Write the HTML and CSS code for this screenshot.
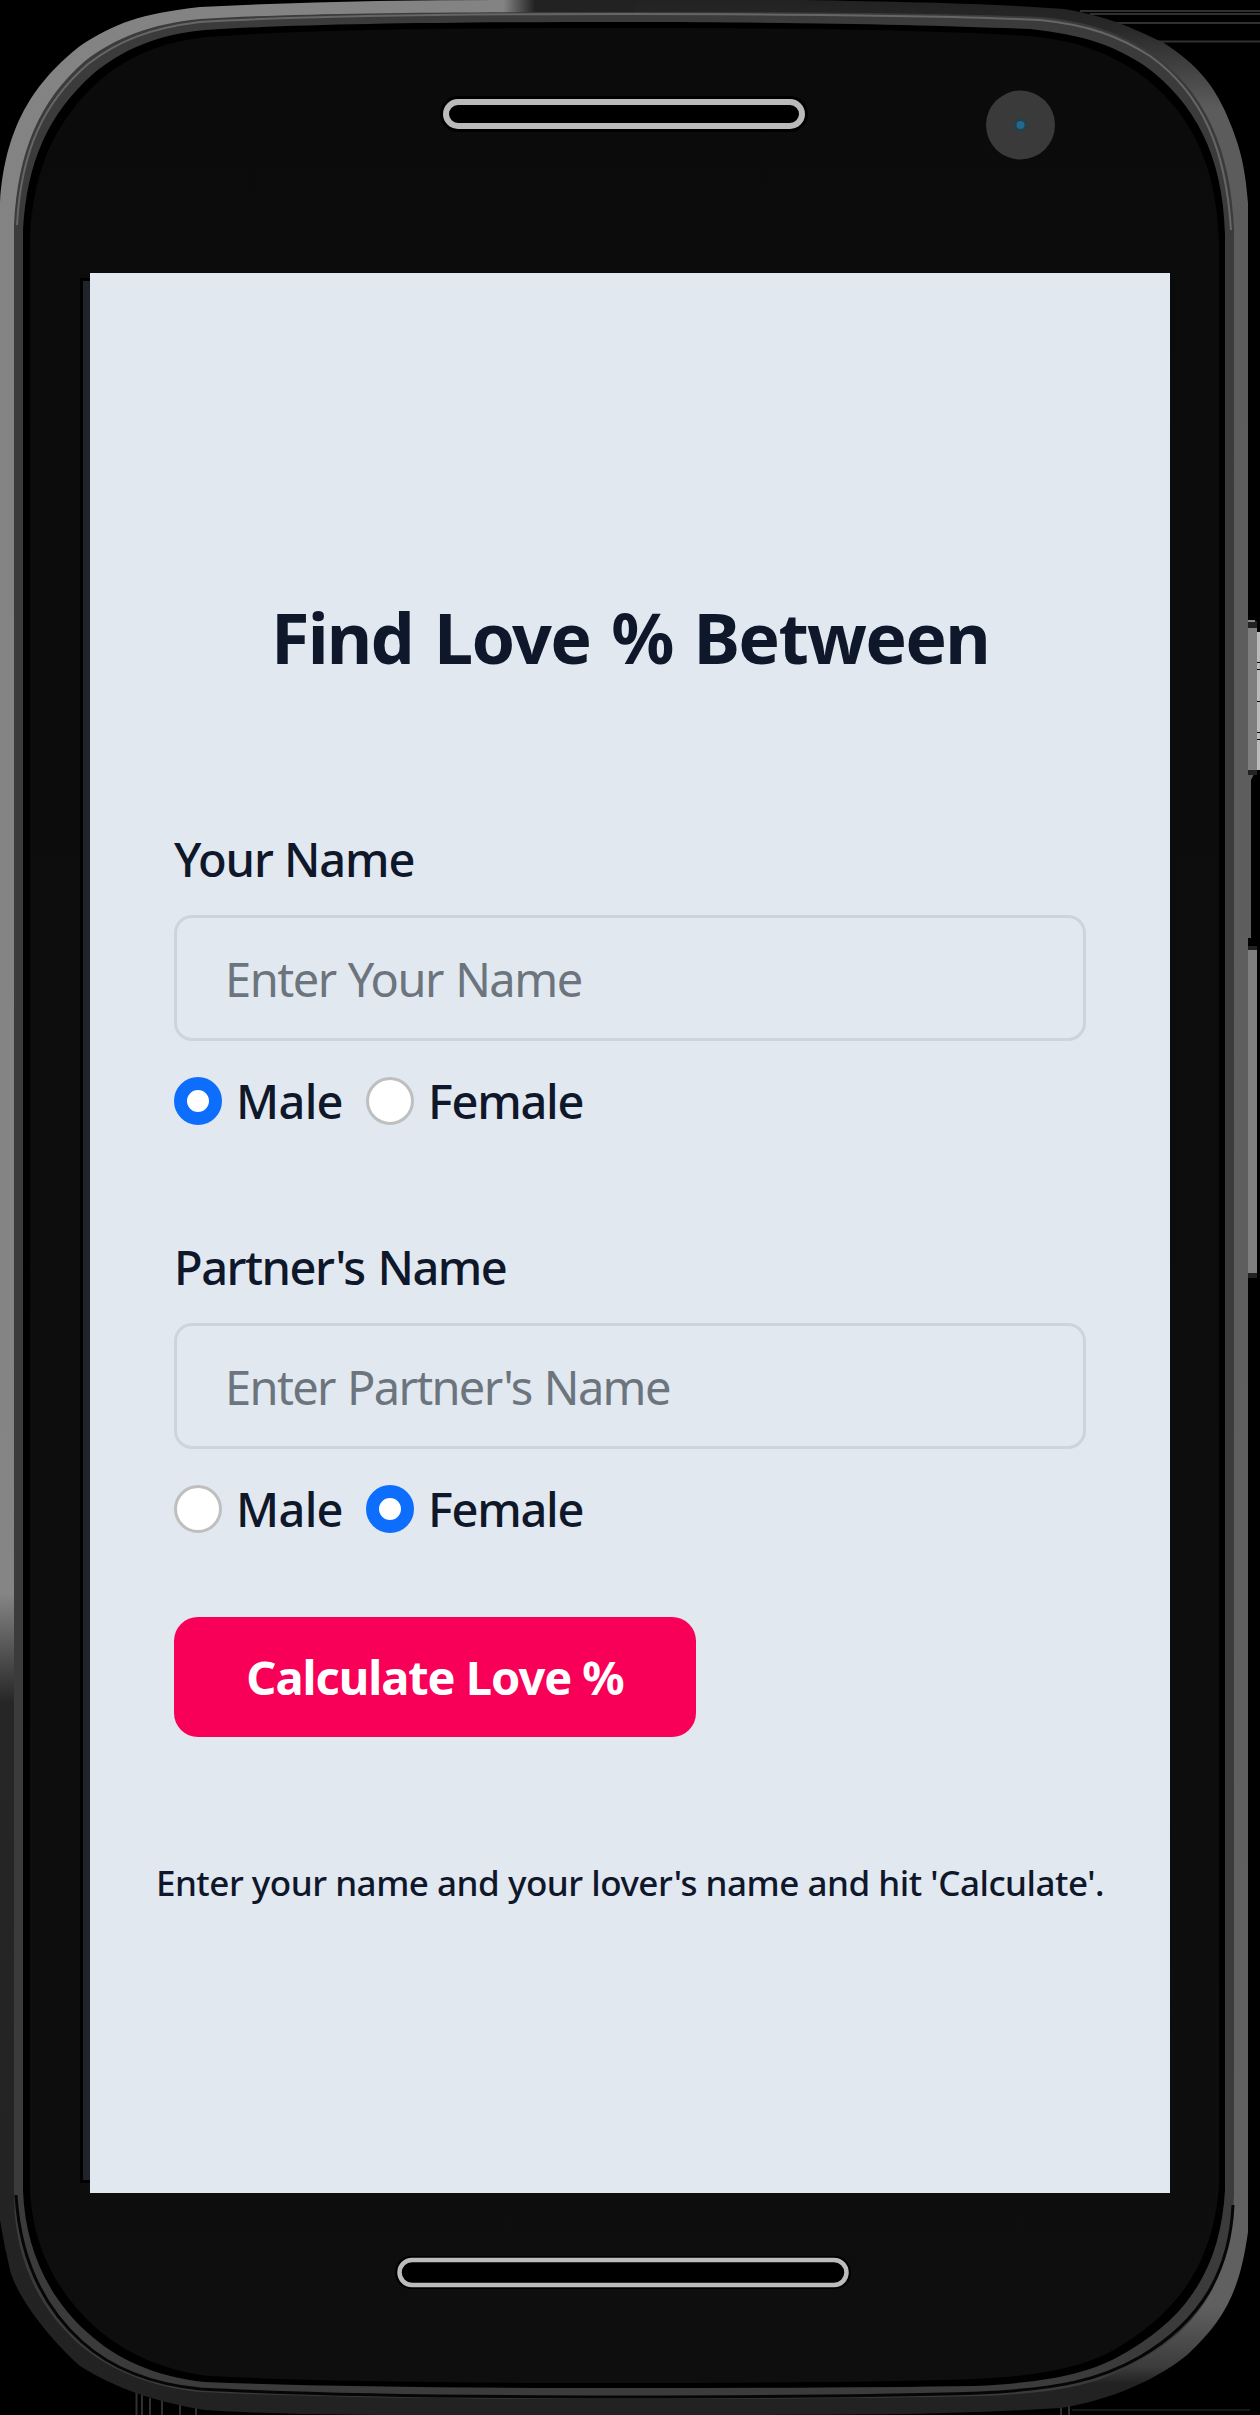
FILE: index.html
```html
<!DOCTYPE html>
<html lang="en">
<head>
<meta charset="utf-8">
<title>Love Calculator</title>
<link rel="stylesheet" href="styles.css">
</head>
<body>
<div class="phone">
  <svg class="phone-body" viewBox="0 0 1260 2415" aria-hidden="true">
    <defs>
      <linearGradient id="left" x1="0" y1="0" x2="0" y2="1">
        <stop offset="0" stop-color="#838383"/><stop offset=".66" stop-color="#858585"/>
        <stop offset=".705" stop-color="#262626"/><stop offset="1" stop-color="#222"/>
      </linearGradient>
      <linearGradient id="right" x1="0" y1="0" x2="0" y2="1">
        <stop offset="0" stop-color="#222"/><stop offset=".012" stop-color="#292929"/>
        <stop offset=".045" stop-color="#5c5c5c"/><stop offset=".955" stop-color="#606060"/>
        <stop offset=".98" stop-color="#3c3c3c"/><stop offset=".987" stop-color="#222"/>
      </linearGradient>
      <linearGradient id="top" x1="0" y1="0" x2="1" y2="0">
        <stop offset="0" stop-color="#838383"/><stop offset=".3" stop-color="#838383"/>
        <stop offset="1" stop-color="#222"/>
      </linearGradient>
      <linearGradient id="bezel" x1="0" y1="0" x2="0" y2="1">
        <stop offset="0" stop-color="#0b0b0b"/><stop offset="1" stop-color="#0e0e0e"/>
      </linearGradient>
      <clipPath id="shell">
        <path d="M0 203C5 120 40 78 80 46C115 23 140 14 200 7C300 2 400 0 500 0H800C920 2 1000 4 1064 9C1110 17 1130 27 1164 43C1190 60 1210 78 1225 111C1240 145 1245 165 1248 203V2232C1240 2290 1225 2320 1187 2355C1150 2385 1100 2402 1060 2408C950 2415 850 2415 750 2415H400Q280 2415 205 2410C155 2402 115 2388 80 2366C40 2330 15 2290 10 2270Q4 2245 0 2220Z"/>
      </clipPath>
    </defs>
    <g class="streaks">
      <path d="M1080 11H1260M1090 14H1260M1115 23H1260M1155 41.500H1260" />
      <path d="M136.500 2390V2415M142 2390V2415M150 2398V2415M162 2400V2415M180 2403V2415M196 2405V2415M1061 2406V2415M1069 2406V2415" />
      <path class="faint" d="M1072 2410H1250" />
    </g>
    <g clip-path="url(#shell)">
      <rect width="630" height="2415" fill="url(#left)"/>
      <rect x="630" width="630" height="2415" fill="url(#right)"/>
      <rect x="490" y="0" width="45" height="40" fill="url(#top)"/>
      <rect x="534" y="0" width="100" height="40" fill="#222"/>
    </g>
    <path fill="#3b3b3c" d="M14 225C18 150 40 100 85 61C115 38 150 24 200 19C300 13 440 12 625 12C800 12 940 13 1040 17C1090 21 1120 34 1150 52C1205 90 1231 150 1234 230V2195C1232 2270 1205 2325 1140 2360C1100 2385 1060 2393 980 2396Q850 2399 625 2399Q350 2399 200 2392C150 2387 110 2370 80 2345C40 2310 14 2260 14 2195Z"/>
    <path fill="none" stroke="#666" stroke-width="2" d="M17 225C21 150 44 102 88 64C118 41 150 28 200 22C300 16 440 14 625 14C800 14 940 15 1040 20C1090 25 1120 37 1150 56C1203 94 1226 150 1231 230"/>
    <path fill="none" stroke="#060606" stroke-width="3" d="M1233 2205C1230 2270 1202 2321 1140 2357C1100 2380 1060 2389 980 2393Q850 2397 625 2397Q350 2397 200 2389C150 2384 110 2367 82 2342C43 2307 20 2260 16 2195"/>
    <path fill="#000" d="M23 230C27 162 48 114 93 74C122 50 155 35 205 30C300 24 440 22 625 22C800 22 930 25 1030 29C1085 35 1115 46 1145 66C1195 103 1223 155 1225 235V2190C1221 2260 1194 2312 1130 2350C1095 2372 1055 2382 975 2386Q850 2388 625 2388Q350 2388 205 2382C155 2377 115 2358 88 2333C50 2300 25 2250 23 2190Z"/>
    <path fill="url(#bezel)" d="M30 235C34 168 55 122 98 82C127 57 160 42 208 37C300 30 440 28 625 28C800 28 930 30 1030 36C1080 41 1110 54 1140 74C1188 110 1216 160 1219 240V2185C1214 2253 1187 2304 1125 2343C1092 2365 1052 2375 975 2379Q850 2383 625 2383Q350 2383 208 2376C160 2370 120 2350 94 2326C57 2292 31 2245 30 2185Z"/>
    <path fill="#000" d="M80 278H90V2183H80Z"/>
    <path fill="#20232a" d="M83 281H90V2180H83Z"/>
    <path fill="#5d5d5d" d="M1247 774H1254L1251 780V938H1247Z"/>
    <path fill="#222" d="M1248 621H1257V775H1248ZM1248 946H1257V1278H1248Z"/>
    <path fill="#7e7e7e" d="M1248 628H1257V770H1248ZM1248 950H1257V1273H1248Z"/>
    <path fill="#888" d="M1248 620H1255V622H1248Z"/>
    <path fill="#bbb" d="M1257 632H1260V770H1257Z"/>
    <path stroke="#000" d="M1257 662.500H1260M1257 669.500H1260M1257 701.500H1260M1257 732.500H1260M1257 739.500H1260"/>
    <rect x="440" y="96" width="368" height="36" rx="18" fill="#000"/>
    <rect x="446" y="102" width="356" height="24" rx="12" fill="#000" stroke="#bababa" stroke-width="6"/>
    <circle cx="1020.500" cy="125" r="34.500" fill="#3a3a3a"/>
    <circle cx="1020.500" cy="125" r="7" fill="#263f49"/>
    <circle cx="1020.500" cy="125" r="4" fill="#236890"/>
    <rect x="395" y="2256" width="456" height="33" rx="16" fill="#000"/>
    <rect x="399.500" y="2260" width="447" height="25" rx="12.500" fill="#000" stroke="#bcbcbc" stroke-width="4.500"/>
  </svg>
  <main class="screen">
    <h1 class="title">Find Love % Between</h1>
    <form class="form">
      <section class="person">
        <label class="name-label" for="you">Your Name</label>
        <input class="name-input" id="you" type="text" placeholder="Enter Your Name">
        <div class="choices">
          <label class="choice"><input class="radio" type="radio" name="g1" checked><span class="male">Male</span></label>
          <label class="choice"><input class="radio" type="radio" name="g1"><span class="female">Female</span></label>
        </div>
      </section>
      <section class="person">
        <label class="name-label partner-label" for="partner">Partner's Name</label>
        <input class="name-input partner-input" id="partner" type="text" placeholder="Enter Partner's Name">
        <div class="choices">
          <label class="choice"><input class="radio" type="radio" name="g2"><span class="male">Male</span></label>
          <label class="choice"><input class="radio" type="radio" name="g2" checked><span class="female">Female</span></label>
        </div>
      </section>
      <button class="calculate" type="button">Calculate Love %</button>
    </form>
    <p class="hint">Enter your name and your lover's name and hit 'Calculate'.</p>
  </main>
</div>
</body>
</html>
```
FILE: styles.css
```css
* { box-sizing: border-box; }
body {
  margin: 0;
  background: #000;
  color: #0f172a;
  font-family: "Noto Sans", "Open Sans", sans-serif;
}
.phone {
  position: relative;
  width: 1260px;
  height: 2415px;
  padding: 273px 90px 222px;
  overflow: hidden;
}
.phone-body {
  position: absolute;
  inset: 0;
  width: 1260px;
  height: 2415px;
}
.streaks path { stroke: #303030; stroke-width: 2; }
.streaks .faint { stroke: #181818; }
.screen {
  position: relative;
  height: 1920px;
  padding: 322px 84px 0;
  background: #e2e8f0;
}
.title {
  margin: 0 0 144px;
  font-size: 70px;
  font-weight: 700;
  line-height: 84px;
  letter-spacing: -1.75px;
  word-spacing: 4.5px;
  text-align: center;
  white-space: nowrap;
}
.form {
  display: flex;
  flex-direction: column;
  align-items: flex-start;
}
.person {
  display: flex;
  flex-direction: column;
  width: 912px;
  margin-bottom: 94px;
}
.person:nth-child(2) { margin-bottom: 72px; }
.name-label {
  margin-bottom: 20px;
  font-size: 47px;
  font-weight: 500;
  line-height: 72px;
  letter-spacing: -1.1px;
}
.partner-label { letter-spacing: -1.5px; word-spacing: 2px; }
.name-input {
  height: 126px;
  margin: 0 0 24px;
  padding: 1px 48px 0;
  border: 3px solid #ced4de;
  border-radius: 18px;
  background: transparent;
  font: 400 47px "Noto Sans", "Open Sans", sans-serif;
  letter-spacing: -1.5px;
  word-spacing: 1.5px;
}
.partner-input { letter-spacing: -1.65px; }
.name-input::placeholder { color: #6c757d; opacity: 1; }
.choices { display: flex; }
.choice {
  display: flex;
  align-items: center;
  gap: 14px;
  min-width: 192px;
  font-size: 47px;
  font-weight: 500;
  line-height: 72px;
}
.male { letter-spacing: -.7px; }
.female { letter-spacing: -1.3px; }
.radio {
  flex: none;
  width: 48px;
  height: 48px;
  margin: 0;
  appearance: none;
  border: 3px solid #bfbfbf;
  border-radius: 50%;
  background: #fff;
}
.radio:checked { border: 13px solid #0d6efd; }
.calculate {
  width: 522px;
  height: 120px;
  padding: 0;
  border: 0;
  border-radius: 24px;
  background: #f80057;
  color: #fff;
  font: 700 47px "Noto Sans", "Open Sans", sans-serif;
  letter-spacing: -1.05px;
}
.hint {
  margin: 119px 0 0 -20px;
  width: 952px;
  font-size: 35px;
  font-weight: 500;
  line-height: 54px;
  letter-spacing: -.48px;
  text-align: center;
  white-space: nowrap;
}
```
